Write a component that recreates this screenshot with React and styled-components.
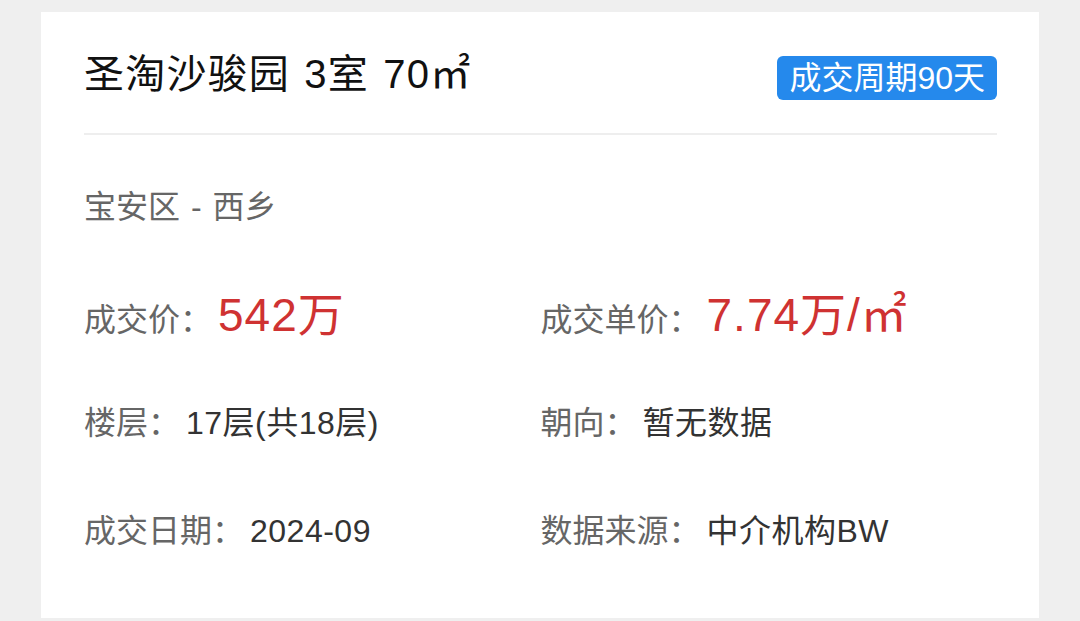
import React from "react";
import styled, { createGlobalStyle } from "styled-components";

const Global = createGlobalStyle`
  html, body {
    margin: 0;
    padding: 0;
    background: #efefef;
  }
  body {
    font-family: "Liberation Sans", "Noto Sans CJK SC", sans-serif;
  }
`;

const Page = styled.div`
  box-sizing: border-box;
  height: 621px;
  padding: 12px 41px 3px 41px;
`;

const Card = styled.div`
  box-sizing: border-box;
  height: 100%;
  background: #ffffff;
  padding: 0 42px 0 43px;
  display: flex;
  flex-direction: column;
`;

const Header = styled.div`
  display: flex;
  justify-content: space-between;
  align-items: flex-start;
  padding: 44px 0 33px;
  border-bottom: 2px solid #eeeeee;
`;

const Title = styled.h1`
  margin: 0;
  font-size: 40px;
  line-height: 36px;
  font-weight: 400;
  color: #111111;
  letter-spacing: 1.2px;
  word-spacing: 2px;
`;

const Badge = styled.span`
  box-sizing: border-box;
  height: 44px;
  padding: 0 12px;
  display: inline-flex;
  align-items: center;
  background: #2589ec;
  color: #ffffff;
  border-radius: 6px;
  font-size: 32px;
  line-height: 1;
`;

const Body = styled.div`
  display: grid;
  grid-template-columns: 1fr 1fr;
  grid-auto-rows: 40px;
  row-gap: 68px;
  padding-top: 52px;
`;

const Location = styled.div`
  grid-column: 1 / -1;
  font-size: 32px;
  line-height: 40px;
  color: #666666;
  word-spacing: 2px;
`;

const Item = styled.div`
  display: flex;
  align-items: baseline;
  gap: 6px;
  line-height: 40px;
  white-space: nowrap;
`;

const Label = styled.span`
  font-size: 32px;
  color: #666666;
`;

const Value = styled.span`
  font-size: ${(p) => (p.$big ? "46px" : "32px")};
  color: ${(p) => (p.$big ? "#cf3232" : "#333333")};
  letter-spacing: ${(p) => (p.$big ? "1px" : "0.5px")};
`;

const rows = [
  [
    { label: "成交价：", value: "542万", big: true },
    { label: "成交单价：", value: "7.74万/㎡", big: true },
  ],
  [
    { label: "楼层：", value: "17层(共18层)" },
    { label: "朝向：", value: "暂无数据" },
  ],
  [
    { label: "成交日期：", value: "2024-09" },
    { label: "数据来源：", value: "中介机构BW" },
  ],
];

export default function App() {
  return (
    <>
      <Global />
      <Page>
        <Card>
          <Header>
            <Title>圣淘沙骏园 3室 70㎡</Title>
            <Badge>成交周期90天</Badge>
          </Header>
          <Body>
            <Location>宝安区 - 西乡</Location>
            {rows.flat().map((it) => (
              <Item key={it.label}>
                <Label>{it.label}</Label>
                <Value $big={it.big}>{it.value}</Value>
              </Item>
            ))}
          </Body>
        </Card>
      </Page>
    </>
  );
}
